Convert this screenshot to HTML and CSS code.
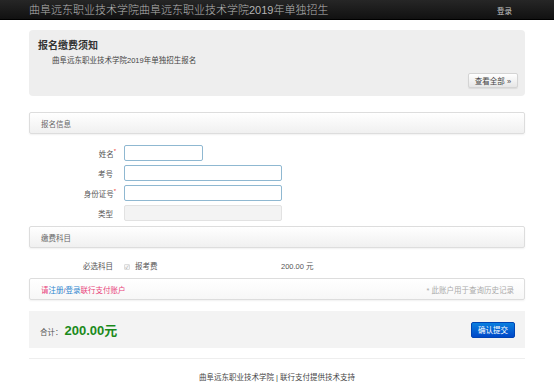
FILE: index.html
```html
<!DOCTYPE html>
<html lang="zh-CN">
<head>
    <meta charset="UTF-8">
    <meta name="viewport" content="width=device-width, initial-scale=1.0">
    <title>报名缴费</title>
    <link rel="stylesheet" href="styles.css">
</head>
<body>
    <!-- Top Bar -->
    <div class="navbar">
        <div class="container nav-inner">
            <a class="brand" href="#">曲阜远东职业技术学院曲阜远东职业技术学院2019年单独招生</a>
            <a class="nav-login" href="#">登录</a>
        </div>
    </div>

    <div class="container">
        <!-- Notice -->
        <div class="hero">
            <h2>报名缴费须知</h2>
            <p>曲阜远东职业技术学院2019年单独招生报名</p>
            <div class="hero-actions">
                <a class="btn" href="#">查看全部 &raquo;</a>
            </div>
        </div>

        <!-- Student Info -->
        <div class="panel-head">报名信息</div>
        <form class="form">
            <div class="form-row">
                <label class="req">姓名</label>
                <input class="input-short" type="text">
            </div>
            <div class="form-row">
                <label>考号</label>
                <input type="text">
            </div>
            <div class="form-row">
                <label class="req">身份证号</label>
                <input type="text">
            </div>
            <div class="form-row">
                <label>类型</label>
                <input type="text" disabled>
            </div>
        </form>

        <!-- Fee Items -->
        <div class="panel-head">缴费科目</div>
        <div class="item-row">
            <label>必选科目</label>
            <span class="check">&#10003;</span>
            <span class="item-name">报考费</span>
            <span class="item-price">200.00 元</span>
        </div>

        <div class="panel-head account">
            <span><span class="pink">请</span><a class="blue" href="#">注册</a><span class="slash">/</span><a class="blue" href="#">登录</a><span class="pink">联行支付账户</span></span>
            <span class="hint">* 此账户用于查询历史记录</span>
        </div>

        <!-- Total -->
        <div class="total">
            <div><span class="total-label">合计：</span><span class="total-num">200.00元</span></div>
            <a class="btn-primary" href="#">确认提交</a>
        </div>

        <hr>
        <div class="footer">曲阜远东职业技术学院 | 联行支付提供技术支持</div>
    </div>
</body>
</html>
```

FILE: styles.css
```css
/* Basic Reset */
* {
    box-sizing: border-box;
    margin: 0;
    padding: 0;
}

body {
    font-family: "Liberation Sans", "Noto Sans CJK SC", sans-serif;
    font-size: 7.5px;
    color: #444;
    background: #fff;
}

a {
    text-decoration: none;
}

.container {
    width: 496px;
    margin: 0 auto;
}

/* Top Bar */
.navbar {
    height: 20px;
    background: linear-gradient(#262626, #111);
    border-bottom: 1px solid #000;
}

.nav-inner {
    height: 20px;
    display: flex;
    align-items: center;
    justify-content: space-between;
}

.brand {
    font-size: 11px;
    font-weight: 300;
    color: #b4b4b4;
    line-height: 20px;
}

.nav-login {
    color: #c8c8c8;
    font-size: 7.5px;
    margin-right: 13px;
}

/* Notice */
.hero {
    margin-top: 10px;
    background-color: #eee;
    border-radius: 4px;
    padding: 10px 7px 8px 9px;
}

.hero h2 {
    font-size: 10px;
    line-height: 12px;
    color: #333;
    font-weight: bold;
}

.hero p {
    margin-top: 4px;
    padding-left: 14px;
    line-height: 9px;
    font-size: 7.5px;
    color: #444;
}

.hero-actions {
    margin-top: 8px;
    display: flex;
    justify-content: flex-end;
}

.btn {
    width: 50px;
    height: 15px;
    display: flex;
    align-items: center;
    justify-content: center;
    background: linear-gradient(#fff, #e6e6e6);
    border: 1px solid #d4d4d4;
    border-radius: 2px;
    box-shadow: 0 1px 1px rgba(0, 0, 0, 0.08);
    color: #444;
    font-size: 7.5px;
}

/* Panel Headings */
.panel-head {
    margin-top: 16px;
    height: 22px;
    display: flex;
    align-items: center;
    padding: 0 11px;
    background: linear-gradient(#fff, #f0f0f0);
    border: 1px solid #ddd;
    border-radius: 2px;
    box-shadow: 0 1px 2px rgba(0, 0, 0, 0.06);
    color: #666;
}

/* Form */
.form {
    margin-top: 11px;
    display: flex;
    flex-direction: column;
    gap: 4px;
}

.form-row {
    display: flex;
    align-items: center;
}

.form-row label,
.item-row label {
    width: 84px;
    margin-right: 11px;
    text-align: right;
    color: #555;
}

.req::after {
    content: "*";
    color: #e33;
    margin-right: -3px;
    font-size: 6px;
    vertical-align: top;
}

.form-row input {
    width: 158px;
    height: 16px;
    border: 1px solid #8fb8d1;
    border-radius: 2px;
    background: #fff;
}

.form-row .input-short {
    width: 79px;
}

.form-row input:disabled {
    background: #f3f3f3;
    border-color: #e2e2e2;
}

.form + .panel-head {
    margin-top: 5px;
}

/* Fee Items */
.item-row {
    display: flex;
    align-items: center;
    padding: 13px 0 5px;
    line-height: 12px;
}

.check {
    width: 6px;
    height: 6px;
    font-size: 5px;
    line-height: 5px;
    color: #999;
    background: #f6f6f6;
    border: 1px solid #ddd;
    border-radius: 1px;
    display: flex;
    justify-content: center;
}

.item-name {
    margin-left: 5px;
    width: 146px;
    color: #555;
}

.item-price {
    color: #555;
}

.account {
    margin-top: 0;
    justify-content: space-between;
    padding-right: 10px;
    background: linear-gradient(#fff, #f7f7f7);
}

.pink {
    color: #e8427a;
}

.blue {
    color: #2f86cf;
}

.slash {
    color: #6a4ca0;
}

.hint {
    color: #aaa;
}

/* Total */
.total {
    margin-top: 11px;
    height: 37px;
    background-color: #f3f3f3;
    display: flex;
    align-items: center;
    justify-content: space-between;
    padding: 0 10px 0 11px;
}

.total-label {
    color: #555;
}

.total-num {
    font-size: 13px;
    font-weight: bold;
    color: #1a8a1a;
    margin-left: 2px;
}

.btn-primary {
    width: 44px;
    height: 16px;
    display: flex;
    align-items: center;
    justify-content: center;
    background: linear-gradient(#0a7fdf, #0048c8);
    border: 1px solid #0044b3;
    border-radius: 2px;
    color: #fff;
    font-size: 7.5px;
}

hr {
    margin-top: 10px;
    border: 0;
    border-top: 1px solid #eee;
}

.footer {
    margin-top: 12px;
    text-align: center;
    color: #444;
}
```
